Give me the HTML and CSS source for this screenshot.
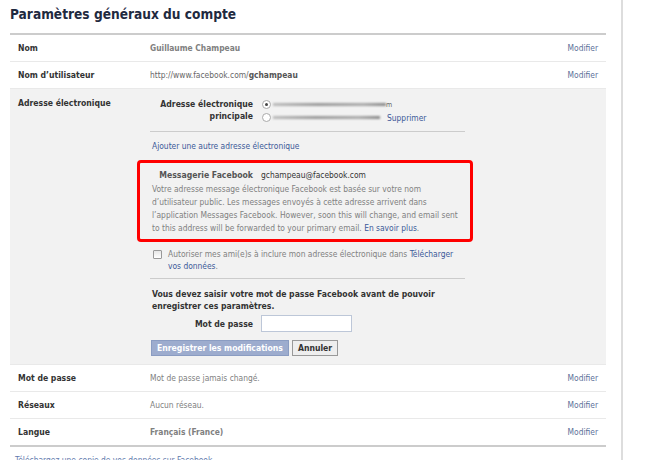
FILE: index.html
```html
<!DOCTYPE html>
<html lang="fr">
<head>
<meta charset="UTF-8">
<title>Paramètres généraux du compte</title>
<link rel="stylesheet" href="styles.css">
</head>
<body>
<div class="page">
    <div class="main">
        <h1>Paramètres généraux du compte</h1>
        <div class="settings">
            <div class="row">
                <div class="label">Nom</div>
                <div class="value strong">Guillaume Champeau</div>
                <a class="edit">Modifier</a>
            </div>
            <div class="row">
                <div class="label">Nom d’utilisateur</div>
                <div class="value url">http://www.facebook.com/<b>gchampeau</b></div>
                <a class="edit">Modifier</a>
            </div>
            <div class="row open">
                <div class="label">Adresse électronique</div>
                <div class="panel">
                    <div class="primary">
                        <div class="field-label">Adresse électronique principale</div>
                        <div class="emails">
                            <div class="email-line">
                                <span class="radio checked"></span>
                                <span class="blur"></span>
                                <span class="tail">m</span>
                            </div>
                            <div class="email-line">
                                <span class="radio"></span>
                                <span class="blur short"></span>
                                <a class="link">Supprimer</a>
                            </div>
                        </div>
                    </div>
                    <div class="divider"></div>
                    <a class="link add">Ajouter une autre adresse électronique</a>
                    <div class="highlight">
                        <div class="fb-mail">
                            <div class="field-label">Messagerie Facebook</div>
                            <div class="fb-address">gchampeau@facebook.com</div>
                        </div>
                        <p class="note">Votre adresse message électronique Facebook est basée sur votre nom d’utilisateur public. Les messages envoyés à cette adresse arrivent dans l’application Messages Facebook. However, soon this will change, and email sent to this address will be forwarded to your primary email. <a class="link">En savoir plus</a>.</p>
                    </div>
                    <label class="allow">
                        <span class="checkbox"></span>
                        <span>Autoriser mes ami(e)s à inclure mon adresse électronique dans <a class="link">Télécharger vos données</a>.</span>
                    </label>
                    <div class="divider"></div>
                    <p class="warning">Vous devez saisir votre mot de passe Facebook avant de pouvoir enregistrer ces paramètres.</p>
                    <div class="password">
                        <div class="field-label">Mot de passe</div>
                        <div class="input"></div>
                    </div>
                    <div class="buttons">
                        <button class="btn save">Enregistrer les modifications</button>
                        <button class="btn cancel">Annuler</button>
                    </div>
                </div>
            </div>
            <div class="row">
                <div class="label">Mot de passe</div>
                <div class="value">Mot de passe jamais changé.</div>
                <a class="edit">Modifier</a>
            </div>
            <div class="row">
                <div class="label">Réseaux</div>
                <div class="value">Aucun réseau.</div>
                <a class="edit">Modifier</a>
            </div>
            <div class="row last">
                <div class="label">Langue</div>
                <div class="value strong">Français (France)</div>
                <a class="edit">Modifier</a>
            </div>
        </div>
        <div class="download">Téléchargez une copie de vos données sur Facebook</div>
    </div>
    <div class="sidebar"></div>
</div>
</body>
</html>
```

FILE: styles.css
```css
body {
    margin: 0;
    padding: 0;
    font-family: "DejaVu Sans Condensed", "DejaVu Sans", sans-serif;
    font-size: 8.4px;
    color: #333;
    background: #fff;
}

.page {
    display: flex;
    height: 460px;
    overflow: hidden;
}

.main {
    width: 596px;
    padding-left: 10px;
}

.sidebar {
    margin-left: 15px;
    width: 0;
    border-left: 2px solid #ddd;
}

h1 {
    margin: 0;
    height: 33px;
    line-height: 28px;
    font-size: 13.6px;
    font-weight: bold;
    color: #1f2a3f;
}

.settings {
    border-top: 2px solid #ccc;
    border-bottom: 2px solid #ccc;
}

.row {
    display: flex;
    align-items: center;
    height: 26px;
    padding: 0 8px;
    border-bottom: 1px solid #e9e9e9;
}

.row.last {
    border-bottom: none;
}

.label {
    width: 132px;
    flex-shrink: 0;
    font-weight: bold;
    font-size: 8.6px;
    color: #333;
}

.value {
    flex: 1;
    color: #808080;
}

.value.strong {
    font-weight: bold;
}

.value.url {
    color: #666;
}

.value.url b {
    color: #555;
}

.edit, .link {
    color: #3b5998;
    text-decoration: none;
    cursor: pointer;
}

.edit {
    color: #5b6f99;
}

.row.open {
    height: auto;
    align-items: flex-start;
    background: #f2f2f2;
    padding-top: 8px;
    padding-bottom: 8px;
    line-height: 12px;
}

.panel {
    width: 315px;
    margin-top: 1px;
}

.primary, .fb-mail, .password {
    display: flex;
}

.field-label {
    width: 103px;
    flex-shrink: 0;
    margin-right: 8px;
    text-align: right;
    font-weight: bold;
    font-size: 8.6px;
    color: #333;
}

.emails {
    flex: 1;
}

.email-line {
    display: flex;
    align-items: center;
    height: 15px;
}

.email-line:first-child {
    height: 12px;
}

.radio {
    width: 7px;
    height: 7px;
    border: 1px solid #aaa;
    border-radius: 50%;
    background: #fff;
    position: relative;
    margin-left: 1px;
}

.radio.checked::after {
    content: "";
    position: absolute;
    left: 2px;
    top: 2px;
    width: 3px;
    height: 3px;
    border-radius: 50%;
    background: #444;
}

.blur {
    width: 113px;
    height: 3px;
    margin-left: 2px;
    background: linear-gradient(90deg, #bbb, #999 40%, #aaa 80%, #888);
    filter: blur(0.8px);
}

.blur.short {
    width: 107px;
    margin-right: 7px;
}

.tail {
    color: #666;
    font-size: 7px;
    line-height: 12px;
    margin-top: 2px;
}

.divider {
    border-top: 1px solid #ccc;
    margin-top: 6px;
}

.add {
    display: block;
    margin-top: 8px;
    padding-left: 2px;
}

.highlight {
    margin: 8px -8px 0 -13px;
    padding: 6px 5px 4px 12px;
    border: 3px solid #f00;
    border-radius: 4px;
}

.highlight .field-label {
    width: 101px;
    color: #555;
}

.fb-address {
    color: #333;
}

.note {
    margin: 2px 0 0;
    line-height: 13px;
    color: #808080;
}

.allow {
    display: flex;
    align-items: flex-start;
    margin-top: 6px;
    color: #808080;
}

.checkbox {
    flex-shrink: 0;
    width: 7px;
    height: 7px;
    margin: 2px 6px 0 3px;
    border: 1px solid #999;
    border-radius: 1px;
    background: linear-gradient(#e6e6e6, #fff);
}

.allow + .divider {
    margin-top: 6px;
}

.warning {
    margin: 9px 0 0 2px;
    font-weight: bold;
    font-size: 8.6px;
    color: #333;
}

.password {
    align-items: center;
    margin-top: 3px;
}

.input {
    width: 89px;
    height: 15px;
    border: 1px solid #bdc7d8;
    background: #fff;
}

.buttons {
    display: flex;
    gap: 3px;
    margin-top: 8px;
    margin-left: 1px;
}

.btn {
    height: 16px;
    padding: 0 3px;
    font-family: inherit;
    font-size: 8.6px;
    font-weight: bold;
    line-height: 14px;
    border: 1px solid;
}

.save {
    color: #fff;
    background: #9dacce;
    border-color: #8a9cc2;
    padding: 0 5px;
}

.cancel {
    color: #333;
    background: #eee;
    border-color: #999;
    padding: 0 5px;
}

.download {
    margin-top: 8px;
    padding-left: 5px;
    color: #627aad;
}
```
